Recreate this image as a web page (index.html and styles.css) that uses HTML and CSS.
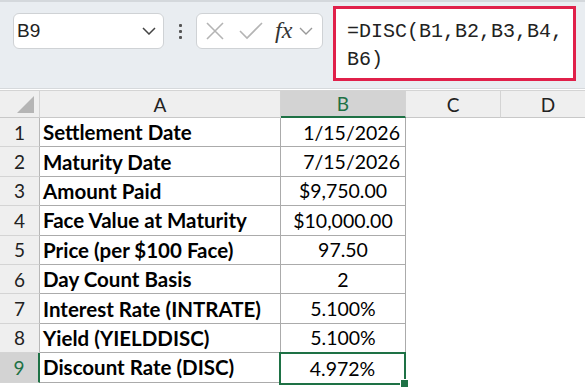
FILE: index.html
```html
<!DOCTYPE html>
<html lang="en">
<head>
  <meta charset="UTF-8" />
  <title>DISC worksheet</title>
  <link rel="stylesheet" href="styles.css">
</head>
<body>
  <div class="toolbar">
    <div class="namebox">
      <span>B9</span>
      <svg width="14" height="8" viewBox="0 0 14 8"><polyline points="1,1 7,7 13,1" fill="none" stroke="#444" stroke-width="1.5"/></svg>
    </div>
    <div class="dots"><i></i><i></i><i></i></div>
    <div class="fxbox">
      <svg class="ico" width="18" height="18" viewBox="0 0 18 18"><path d="M1 1 L17 17 M17 1 L1 17" stroke="#b4b4b4" stroke-width="1.6" fill="none"/></svg>
      <svg class="ico" width="24" height="18" viewBox="0 0 24 18"><polyline points="1,9 8,16 23,1" stroke="#b4b4b4" stroke-width="1.6" fill="none"/></svg>
      <span class="fx">fx</span>
      <svg width="14" height="8" viewBox="0 0 14 8"><polyline points="1,1 7,7 13,1" fill="none" stroke="#999" stroke-width="1.4"/></svg>
    </div>
    <div class="formula">=DISC(B1,B2,B3,B4,<br>B6)</div>
  </div>

  <div class="sheet">
    <div class="corner"><span class="tri"></span></div>
    <div class="colhead">A</div>
    <div class="colhead active">B</div>
    <div class="colhead">C</div>
    <div class="colhead">D</div>

    <div class="rowhead">1</div><div class="cell label">Settlement Date</div><div class="cell num right">1/15/2026</div><div class="blank"></div><div class="blank"></div>
    <div class="rowhead">2</div><div class="cell label">Maturity Date</div><div class="cell num right">7/15/2026</div><div class="blank"></div><div class="blank"></div>
    <div class="rowhead">3</div><div class="cell label">Amount Paid</div><div class="cell num">$9,750.00</div><div class="blank"></div><div class="blank"></div>
    <div class="rowhead">4</div><div class="cell label">Face Value at Maturity</div><div class="cell num">$10,000.00</div><div class="blank"></div><div class="blank"></div>
    <div class="rowhead">5</div><div class="cell label">Price (per $100 Face)</div><div class="cell num">97.50</div><div class="blank"></div><div class="blank"></div>
    <div class="rowhead">6</div><div class="cell label">Day Count Basis</div><div class="cell num">2</div><div class="blank"></div><div class="blank"></div>
    <div class="rowhead">7</div><div class="cell label">Interest Rate (INTRATE)</div><div class="cell num">5.100%</div><div class="blank"></div><div class="blank"></div>
    <div class="rowhead">8</div><div class="cell label">Yield (YIELDDISC)</div><div class="cell num">5.100%</div><div class="blank"></div><div class="blank"></div>
    <div class="rowhead active">9</div><div class="cell label">Discount Rate (DISC)</div><div class="cell num selected">4.972%<span class="handle"></span></div><div class="blank"></div><div class="blank"></div>
  </div>
</body>
</html>
```

FILE: styles.css
```css
body {
  margin: 0;
  background: #fff;
  font-family: Lato, "Open Sans", sans-serif;
  color: #000;
  width: 585px;
  height: 388px;
  overflow: hidden;
}

.toolbar {
  height: 89px;
  box-sizing: border-box;
  background: #e9edf1;
  border-top: 2px solid #d4d8dc;
  border-bottom: 1px solid #d6d9dc;
  display: flex;
  align-items: flex-start;
  padding: 0 9px 0 13px;
}

.namebox {
  margin-top: 11px;
  width: 151px;
  height: 36px;
  box-sizing: border-box;
  background: #fff;
  border: 1px solid #cfd2d5;
  border-radius: 6px;
  display: flex;
  align-items: center;
  justify-content: space-between;
  padding: 0 7px 0 3px;
  font-family: "Liberation Sans", Arial, sans-serif;
  font-size: 19px;
  color: #222;
}

.dots {
  margin: 22px 0 0 12px;
  width: 8px;
  display: flex;
  flex-direction: column;
  align-items: center;
  gap: 3px;
}
.dots i {
  width: 3px;
  height: 3px;
  background: #555;
  border-radius: 1px;
}

.fxbox {
  margin: 11px 0 0 12px;
  width: 127px;
  height: 36px;
  box-sizing: border-box;
  background: #fff;
  border: 1px solid #cfd2d5;
  border-radius: 6px;
  display: flex;
  align-items: center;
  padding: 0 3px 0 9px;
}
.fxbox .ico { margin-right: 15px; }
.fxbox .ico + .ico { margin-right: 12px; }
.fx {
  font-family: "Liberation Serif", "Times New Roman", serif;
  font-style: italic;
  font-size: 24px;
  color: #333;
  margin-right: 7px;
  line-height: 1;
  padding-bottom: 3px;
}

.formula {
  margin: 4px 0 0 10px;
  flex: 1;
  height: 75px;
  box-sizing: border-box;
  background: #fff;
  border: 3px solid #e0204a;
  padding: 9px 0 0 11px;
  font-family: "Liberation Mono", "DejaVu Sans Mono", monospace;
  font-size: 20px;
  line-height: 28px;
  color: #222;
}

.sheet {
  margin-top: 1px;
  display: grid;
  grid-template-columns: 40px 241px 125px 95px 95px;
  grid-template-rows: 28px repeat(9, 29.4px);
}

.corner, .colhead, .rowhead {
  background: #efefef;
  border-right: 1px solid #d4d4d4;
  border-bottom: 1px solid #c8c8c8;
  border-top: 1px solid #d4d4d4;
  box-sizing: border-box;
  display: flex;
  align-items: center;
  justify-content: center;
  font-size: 19px;
  color: #222;
}
.rowhead { border-top: none; border-bottom: 1px solid #d4d4d4; border-right: 1px solid #b8b8b8; }
.corner { position: relative; }
.tri {
  position: absolute;
  right: 5px;
  bottom: 4px;
  width: 0;
  height: 0;
  border-left: 17px solid transparent;
  border-bottom: 17px solid #b5b5b5;
}
.colhead.active {
  background: #d3d3d3;
  color: #1e7145;
  border-bottom: 2px solid #1e7145;
}
.rowhead.active {
  background: #d3d3d3;
  color: #1e7145;
  border-right: 2px solid #1e7145;
}

.cell {
  border-right: 1px solid #ababab;
  border-bottom: 1px solid #ababab;
  box-sizing: border-box;
  display: flex;
  align-items: center;
  font-size: 19.5px;
  white-space: nowrap;
}
.label {
  font-weight: bold;
  font-size: 20.5px;
  padding-left: 3px;
}
.num { justify-content: center; }
.num.right { justify-content: flex-end; padding-right: 5px; }

.selected {
  position: relative;
  border: 2px solid #1e7145;
  margin: -1px 0 -2px -2px;
}
.handle {
  position: absolute;
  right: -5px;
  bottom: -5px;
  width: 7px;
  height: 7px;
  background: #1e7145;
  border: 1px solid #fff;
}

.blank { background: #fff; }
```
